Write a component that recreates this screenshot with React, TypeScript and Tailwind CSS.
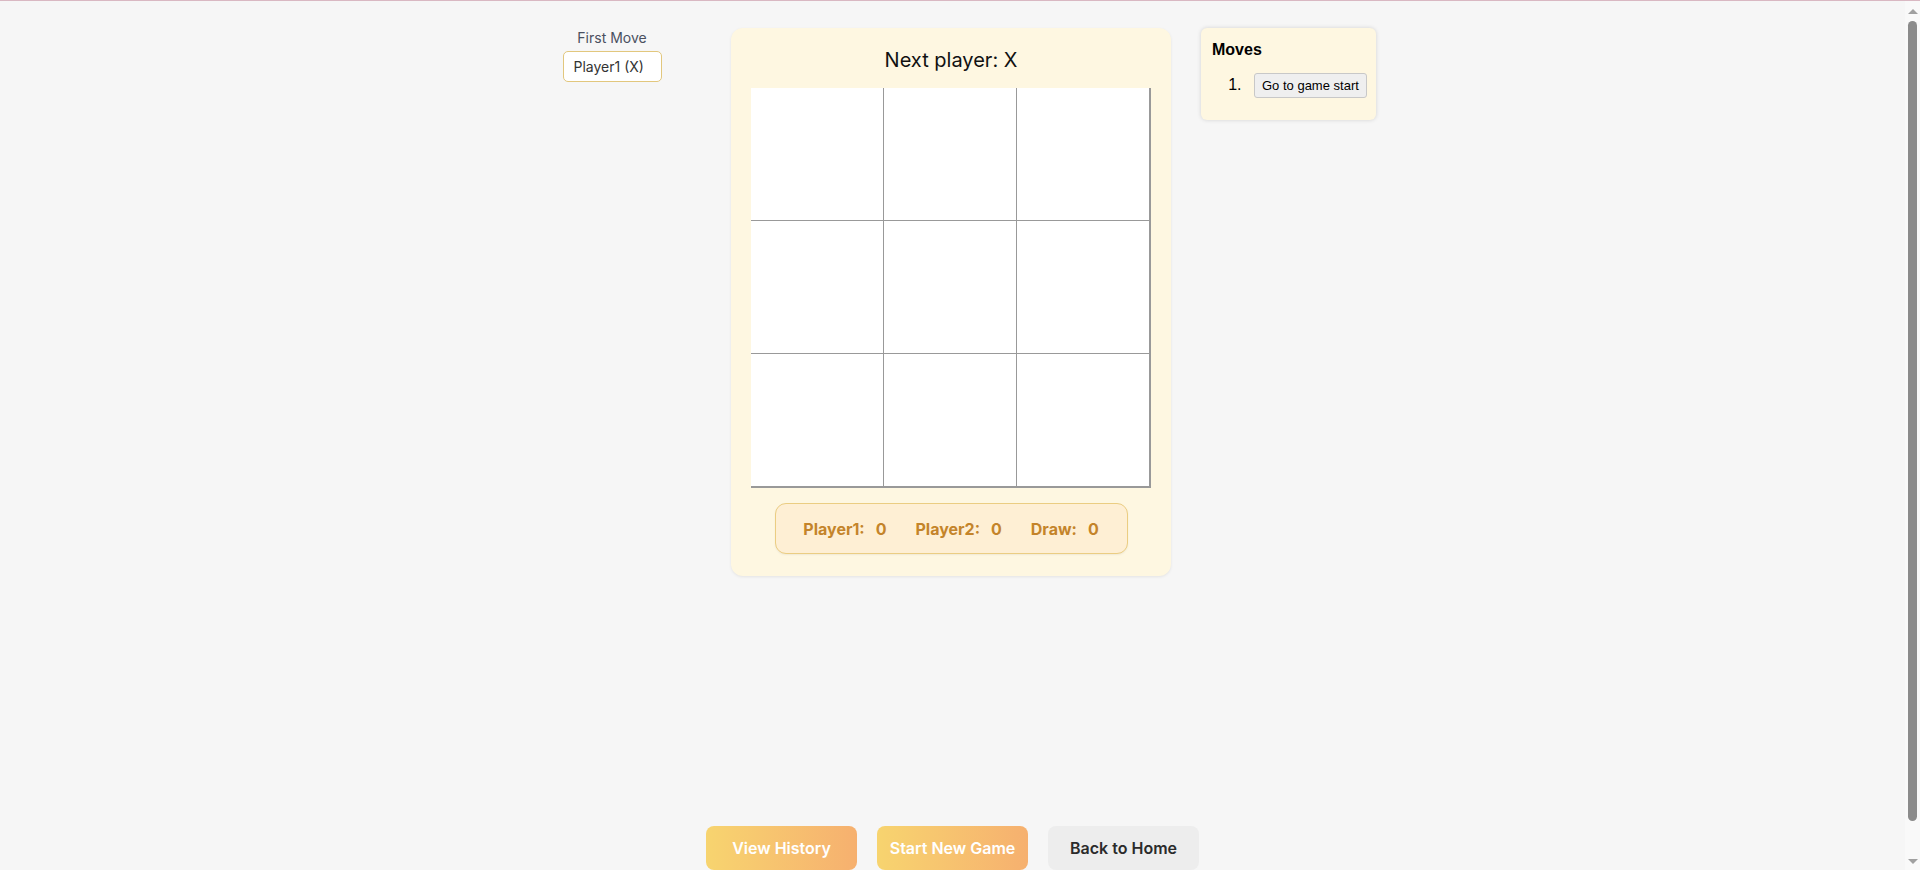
import React from "react";

const inter = { fontFamily: "Inter, 'Noto Sans', sans-serif" };

function ScoreItem({ label }: { label: string }) {
  return (
    <span className="flex items-baseline">
      <span>{label}:</span>
      <span className="ml-[11px]">0</span>
    </span>
  );
}

export default function App() {
  const cells = Array.from({ length: 9 });
  return (
    <div className="h-screen overflow-hidden flex border-t border-[#d9b8c2] bg-[#f6f6f6]" style={inter}>
      <div className="flex-1 pt-[27px] pb-[40px]">
        <div className="flex justify-center items-start gap-[30px]">
          {/* Left column */}
          <div className="w-[172px] flex flex-col items-center pr-[6px]">
            <div className="text-[14px] leading-[20px] text-[#4a5060]">First Move</div>
            <div className="mt-[3px] w-[99px] h-[31px] bg-white border border-[#e2c77d] rounded-[5px] flex items-center pl-[10px] text-[14px] text-[#333]">
              Player1 (X)
            </div>
          </div>

          {/* Main card */}
          <div className="w-[440px] bg-[#fef7e1] rounded-[12px] shadow-[0_1px_3px_rgba(0,0,0,0.08)] px-[20px] pt-[18px] pb-[22px] flex flex-col items-center">
            <div className="h-[28px] text-[20px] leading-[28px] text-[#111] mb-[14px]">Next player: X</div>
            <div className="grid grid-cols-[133px_133px_133px] border-r border-b border-[#999] bg-white">
              {cells.map((_, i) => (
                <div key={i} className="w-[133px] h-[133px] bg-white border-r border-b border-[#999]" />
              ))}
            </div>
            <div className="mt-[15px] w-[353px] h-[51px] bg-[#feefd4] border border-[#ebcd82] rounded-[11px] shadow-[0_1px_2px_rgba(0,0,0,0.06)] flex items-center justify-center gap-[29px] text-[16px] font-bold text-[#c4842a]">
              <ScoreItem label="Player1" />
              <ScoreItem label="Player2" />
              <ScoreItem label="Draw" />
            </div>
          </div>

          {/* Moves card */}
          <div
            className="w-[175px] bg-[#fef7e1] rounded-[6px] shadow-[0_0_4px_rgba(0,0,0,0.15)] pt-[12px] pl-[11px] pb-[22px]"
            style={{ fontFamily: "'Liberation Sans', Arial, sans-serif" }}
          >
            <div className="text-[16px] leading-[20px] font-bold text-black">Moves</div>
            <ol className="list-decimal pl-[34px] mt-[13px] text-[16px] text-black">
              <li className="pl-[8px]">
                <button className="h-[25px] px-[7px] bg-[#efefef] border border-[#c8c8c8] rounded-[3px] text-[13px] text-black leading-none">
                  Go to game start
                </button>
              </li>
            </ol>
          </div>
        </div>

        <div className="mt-[250px] flex justify-center gap-[20px]">
          <button className="w-[151px] h-[44px] rounded-[8px] bg-gradient-to-r from-[#f7d46f] to-[#f6b06f] text-white text-[16px] font-semibold">
            View History
          </button>
          <button className="w-[151px] h-[44px] rounded-[8px] bg-gradient-to-r from-[#f7d46f] to-[#f6b06f] text-white text-[16px] font-semibold">
            Start New Game
          </button>
          <button className="w-[151px] h-[44px] rounded-[8px] bg-[#ededed] text-[#2b2b2b] text-[16px] font-semibold">
            Back to Home
          </button>
        </div>
      </div>

      {/* Scrollbar */}
      <div className="w-[15px] shrink-0 bg-[#f9f9f9] flex flex-col items-center">
        <div className="h-[20px] flex items-center justify-center">
          <div className="w-0 h-0 border-l-[5px] border-r-[5px] border-b-[5px] border-l-transparent border-r-transparent border-b-[#a0a0a0]" />
        </div>
        <div className="w-[9px] h-[800px] rounded-full bg-[#8b8b8b]" />
        <div className="flex-1 flex flex-col items-center justify-end pb-[6px]">
          <div className="w-0 h-0 border-l-[5px] border-r-[5px] border-t-[5px] border-l-transparent border-r-transparent border-t-[#a0a0a0]" />
        </div>
      </div>
    </div>
  );
}
